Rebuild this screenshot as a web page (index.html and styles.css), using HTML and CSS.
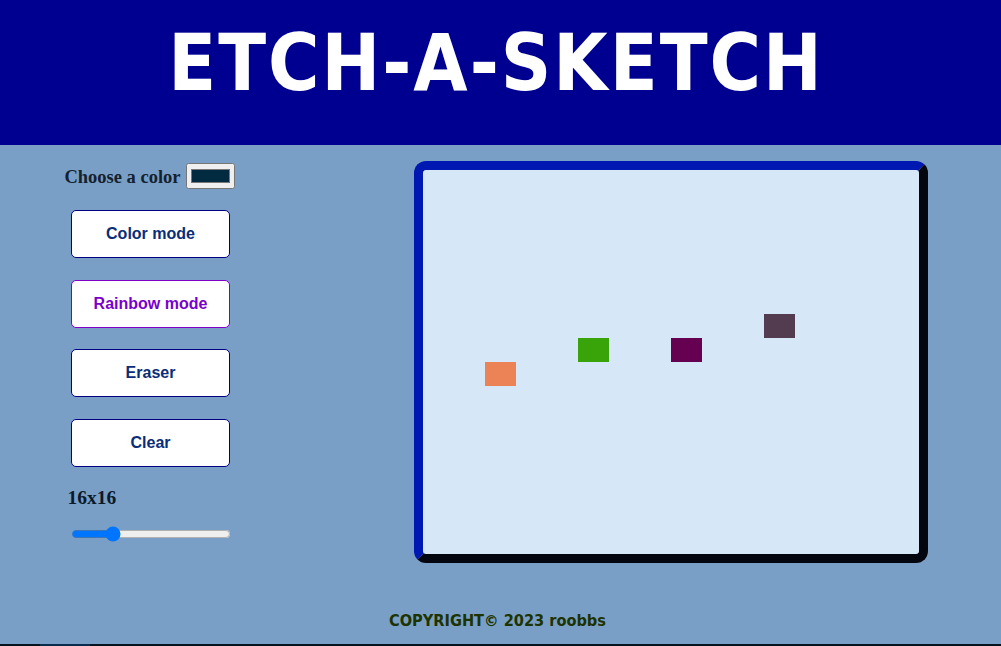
FILE: index.html
```html
<!DOCTYPE html>
<html lang="en">
<head>
<meta charset="utf-8">
<title>Etch-a-Sketch</title>
<link rel="stylesheet" href="styles.css">
</head>
<body>
<header class="top">
  <h1 class="title">ETCH-A-SKETCH</h1>
</header>
<main class="main">
  <section class="controls">
    <div class="color-row">
      <label class="color-label" for="pick">Choose a color</label>
      <input class="color-input" id="pick" type="color" value="#022b42">
    </div>
    <button class="btn">Color mode</button>
    <button class="btn btn-rainbow">Rainbow mode</button>
    <button class="btn">Eraser</button>
    <button class="btn">Clear</button>
    <div class="size-box">
      <div class="size-label">16x16</div>
      <input class="slider" type="range" min="1" max="64" value="16">
    </div>
  </section>
  <section class="board">
    <div class="cell c-orange"></div>
    <div class="cell c-green"></div>
    <div class="cell c-purple"></div>
    <div class="cell c-plum"></div>
  </section>
</main>
<footer class="foot">COPYRIGHT© 2023 roobbs</footer>
<div class="bottom-bar"><span class="bottom-tab"></span></div>
</body>
</html>
```
FILE: styles.css
```css
* { box-sizing: border-box; }
html, body { margin: 0; padding: 0; }
body {
  background: #7a9fc7;
  font-family: "Liberation Serif", serif;
}
.top {
  height: 145px;
  background: #000090;
  padding-top: 24px;
}
.title {
  margin: 0;
  text-align: center;
  color: #ffffff;
  font-family: "DejaVu Sans", sans-serif;
  font-stretch: condensed;
  font-weight: bold;
  font-size: 78px;
  line-height: 78px;
  letter-spacing: 2px;
  padding-right: 9px;
}
.main {
  display: flex;
  padding-top: 16px;
}
.controls {
  width: 301px;
  display: flex;
  flex-direction: column;
  align-items: center;
}
.color-row {
  display: flex;
  align-items: center;
  gap: 5px;
  height: 27px;
  margin-top: 1px;
  margin-left: -2px;
}
.color-label {
  font-family: "Liberation Serif", serif;
  font-weight: bold;
  font-size: 18.5px;
  color: #14222e;
  padding-top: 3px;
}
.color-input {
  width: 49px;
  height: 26px;
  margin: 0;
}
.btn {
  width: 159px;
  height: 48px;
  margin-top: 21.7px;
  background: #ffffff;
  border: 1px solid #000080;
  border-radius: 5px;
  font-family: "Liberation Sans", sans-serif;
  font-weight: bold;
  font-size: 16px;
  color: #0a2d78;
}
.color-row + .btn { margin-top: 21px; }
.btn-rainbow {
  border-color: #8000c8;
  color: #7a00cc;
}
.size-box {
  width: 160px;
  margin-top: 20px;
}
.size-label {
  font-family: "Liberation Serif", serif;
  font-weight: bold;
  font-size: 19.5px;
  color: #0a1a2a;
  margin-left: -3px;
}
.slider {
  display: block;
  width: 160px;
  margin: 17px 0 0 0;
}
.board {
  margin-left: 113px;
  width: 514px;
  height: 402px;
  border: 9px solid;
  border-color: #0018b2 #04060f #04060f #0018b2;
  border-radius: 12px;
  background: #d6e8f7;
  display: grid;
  grid-template-columns: repeat(16, 31px);
  grid-template-rows: repeat(16, 24px);
}
.c-orange { grid-row: 9; grid-column: 3; background: #eb8357; }
.c-green { grid-row: 8; grid-column: 6; background: #38a40a; }
.c-purple { grid-row: 8; grid-column: 9; background: #660050; }
.c-plum { grid-row: 7; grid-column: 12; background: #533c50; }
.foot {
  text-align: center;
  margin-top: 48px;
  height: 33px;
  padding-right: 6px;
  font-family: "DejaVu Sans", sans-serif;
  font-stretch: condensed;
  font-weight: bold;
  font-size: 16.2px;
  color: #1d3300;
}
.bottom-bar {
  height: 40px;
  background: #051220;
  padding-left: 40px;
}
.bottom-tab {
  display: block;
  width: 50px;
  height: 40px;
  background: #0a2c4c;
}
```
